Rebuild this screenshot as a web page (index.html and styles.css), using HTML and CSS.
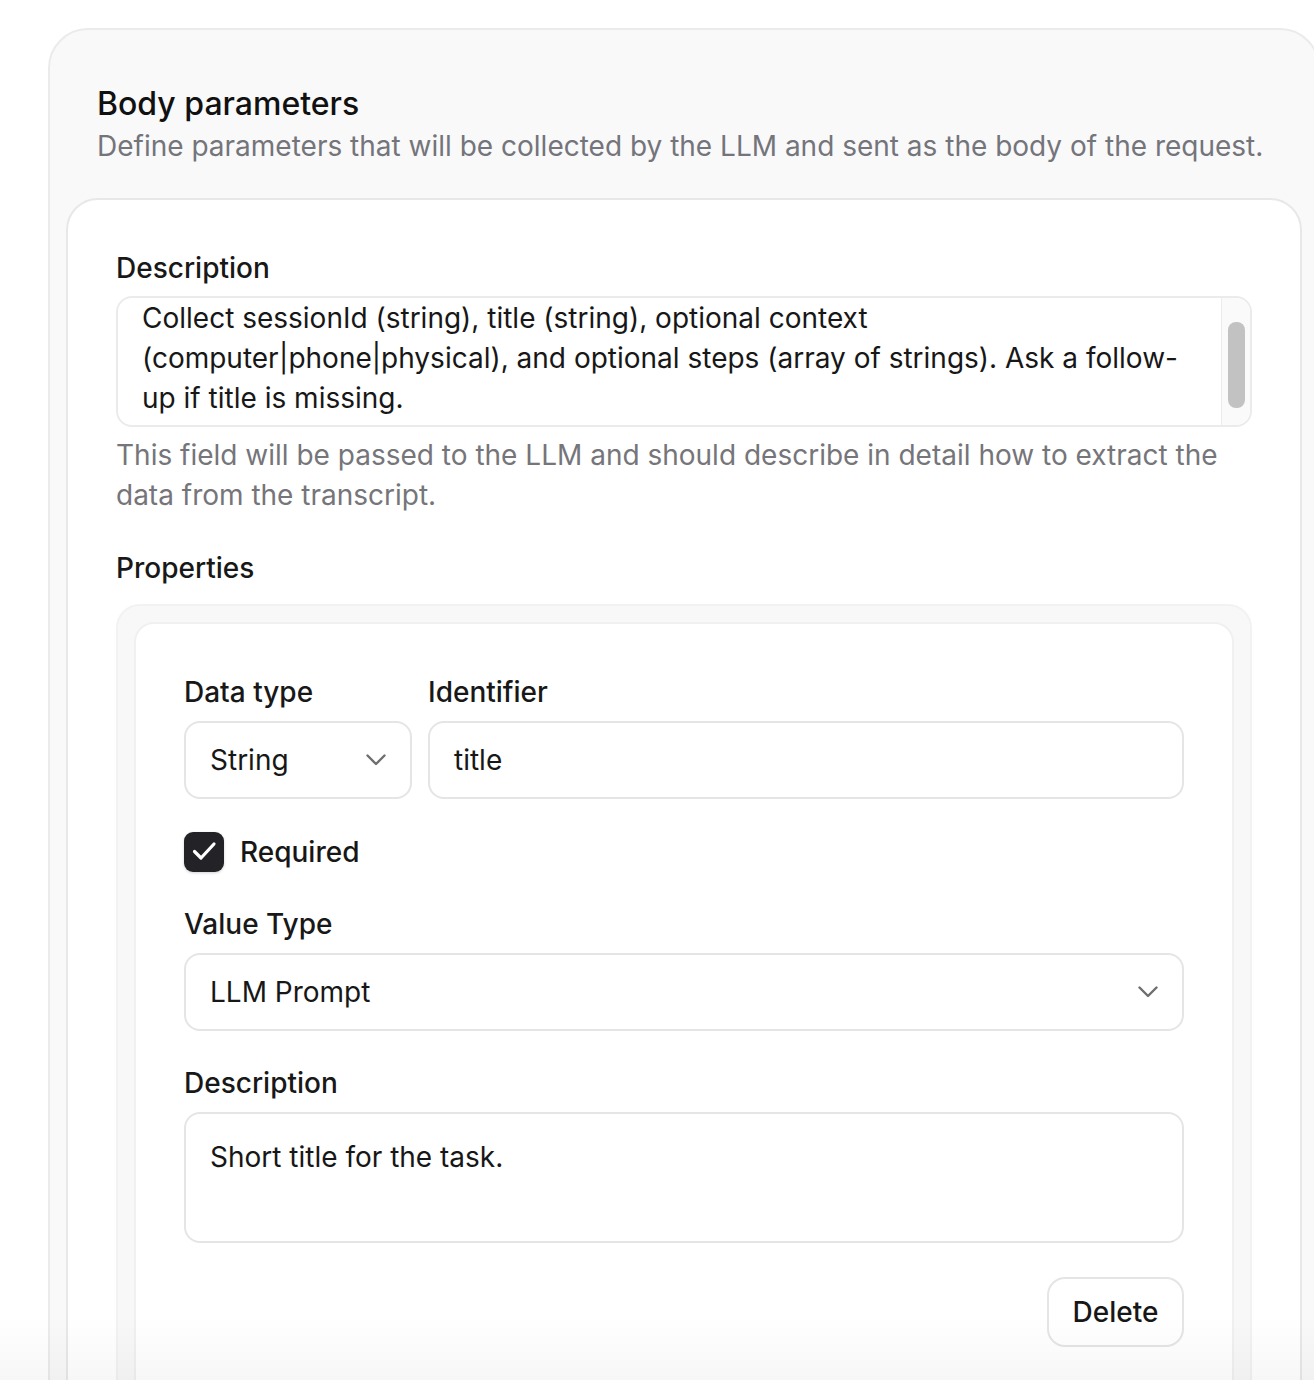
FILE: index.html
```html
<!DOCTYPE html>
<html lang="en">
<head>
<meta charset="utf-8">
<title>Body parameters</title>
<link rel="stylesheet" href="styles.css">
</head>
<body>
<div class="outer">
  <div class="header">
    <h2 class="title">Body parameters</h2>
    <p class="subtitle">Define parameters that will be collected by the LLM and sent as the body of the request.</p>
  </div>
  <div class="card">
    <div class="label">Description</div>
    <div class="textarea-scroll">
      <div class="ta-text">Collect sessionId (string), title (string), optional context (computer|phone|physical), and optional steps (array of strings). Ask a follow-up if title is missing.</div>
      <div class="ta-track"><div class="ta-thumb"></div></div>
    </div>
    <p class="help">This field will be passed to the LLM and should describe in detail how to extract the data from the transcript.</p>
    <div class="label props-label">Properties</div>
    <div class="props">
      <div class="prop-card">
        <div class="row">
          <div class="field">
            <div class="label">Data type</div>
            <div class="input select">
              <span>String</span>
              <svg class="chev" width="20" height="12" viewBox="0 0 20 12"><polyline points="1.5,1.5 10,10 18.5,1.5" fill="none" stroke="#6e6e6e" stroke-width="2.4" stroke-linecap="round" stroke-linejoin="round"/></svg>
            </div>
          </div>
          <div class="field">
            <div class="label">Identifier</div>
            <div class="input"><span>title</span></div>
          </div>
        </div>
        <div class="check-row">
          <span class="checkbox"><svg width="40" height="40" viewBox="0 0 40 40"><polyline points="10.5,19.5 17,26 30,12" fill="none" stroke="#fff" stroke-width="3.2" stroke-linecap="round" stroke-linejoin="round"/></svg></span>
          <span class="check-label">Required</span>
        </div>
        <div class="field section">
          <div class="label">Value Type</div>
          <div class="input select">
            <span>LLM Prompt</span>
            <svg class="chev" width="20" height="12" viewBox="0 0 20 12"><polyline points="1.5,1.5 10,10 18.5,1.5" fill="none" stroke="#6e6e6e" stroke-width="2.4" stroke-linecap="round" stroke-linejoin="round"/></svg>
          </div>
        </div>
        <div class="field section">
          <div class="label">Description</div>
          <div class="input textarea">Short title for the task.</div>
        </div>
        <div class="actions">
          <button class="btn">Delete</button>
        </div>
      </div>
    </div>
  </div>
</div>
<div class="fade"></div>
</body>
</html>
```
FILE: styles.css
```css
* { box-sizing: border-box; }
html, body { margin: 0; padding: 0; }
body {
  background: #ffffff;
  font-family: Inter, "Noto Sans", sans-serif;
  color: #171717;
  overflow: hidden;
  height: 1380px;
}
.outer {
  margin: 28px 0 0 48px;
  width: 1272px;
  background: #f9f9f9;
  border: 2px solid #ebebeb;
  border-radius: 40px;
  padding: 16px;
}
.header {
  padding: 38px 24px 32px 31px;
}
.title {
  margin: 0;
  font-size: 32px;
  line-height: 40px;
  font-weight: 500;
  color: #111111;
}
.subtitle {
  margin: 2px 0 0;
  font-size: 28px;
  line-height: 40px;
  color: #74747b;
}
.card {
  background: #ffffff;
  border: 2px solid #e8e8e8;
  border-radius: 32px;
  padding: 48px;
}
.label {
  font-size: 28px;
  line-height: 40px;
  font-weight: 500;
  color: #181818;
}
.textarea-scroll {
  margin-top: 8px;
  height: 131px;
  border: 2px solid #ebebeb;
  border-radius: 16px;
  display: flex;
  overflow: hidden;
}
.ta-text {
  flex: 1;
  padding: 0 16px 0 24px;
  font-size: 28px;
  line-height: 40px;
  color: #171717;
}
.ta-track {
  width: 29px;
  flex: none;
  border-left: 1px solid #ececec;
  background: #fafafa;
  padding: 24px 5px 0 6px;
}
.ta-thumb {
  height: 86px;
  border-radius: 8px;
  background: #c2c2c2;
}
.help {
  margin: 8px 0 0;
  font-size: 28px;
  line-height: 40px;
  color: #75757a;
}
.props-label {
  margin-top: 33px;
}
.props {
  margin-top: 16px;
  background: #f8f8f8;
  border: 2px solid #f2f2f2;
  border-radius: 24px;
  padding: 16px;
  height: 800px;
}
.prop-card {
  background: #ffffff;
  border: 2px solid #f0f0f0;
  border-radius: 20px;
  padding: 48px;
  height: 900px;
}
.row {
  display: grid;
  grid-template-columns: 228px 1fr;
  gap: 16px;
}
.field .label {
  margin-bottom: 9px;
}
.input {
  height: 78px;
  border: 2px solid #e5e5e5;
  border-radius: 16px;
  padding: 0 24px 0 24px;
  display: flex;
  align-items: center;
  font-size: 28px;
  line-height: 40px;
  color: #171717;
}
.select {
  justify-content: space-between;
}
.chev { display: block; }
.check-row {
  margin-top: 33px;
  display: flex;
  align-items: center;
  gap: 16px;
  height: 40px;
}
.checkbox {
  width: 40px;
  height: 40px;
  border-radius: 9px;
  background: #232327;
  box-shadow: 0 1px 3px rgba(0,0,0,0.18);
  display: block;
}
.checkbox svg { display: block; }
.check-label {
  font-size: 28px;
  line-height: 40px;
  font-weight: 500;
  color: #171717;
}
.section {
  margin-top: 32px;
}
.textarea {
  height: 131px;
  align-items: flex-start;
  padding-top: 23px;
}
.actions {
  margin-top: 34px;
  display: flex;
  justify-content: flex-end;
}
.btn {
  height: 70px;
  width: 137px;
  border: 2px solid #e5e5e5;
  border-radius: 18px;
  background: #ffffff;
  font-family: Inter, "Noto Sans", sans-serif;
  font-size: 28px;
  font-weight: 500;
  color: #171717;
  padding: 0;
}
.fade {
  position: fixed;
  left: 0;
  right: 0;
  bottom: 0;
  height: 64px;
  background: linear-gradient(to bottom, rgba(0,0,0,0), rgba(0,0,0,0.03));
  pointer-events: none;
}
```
